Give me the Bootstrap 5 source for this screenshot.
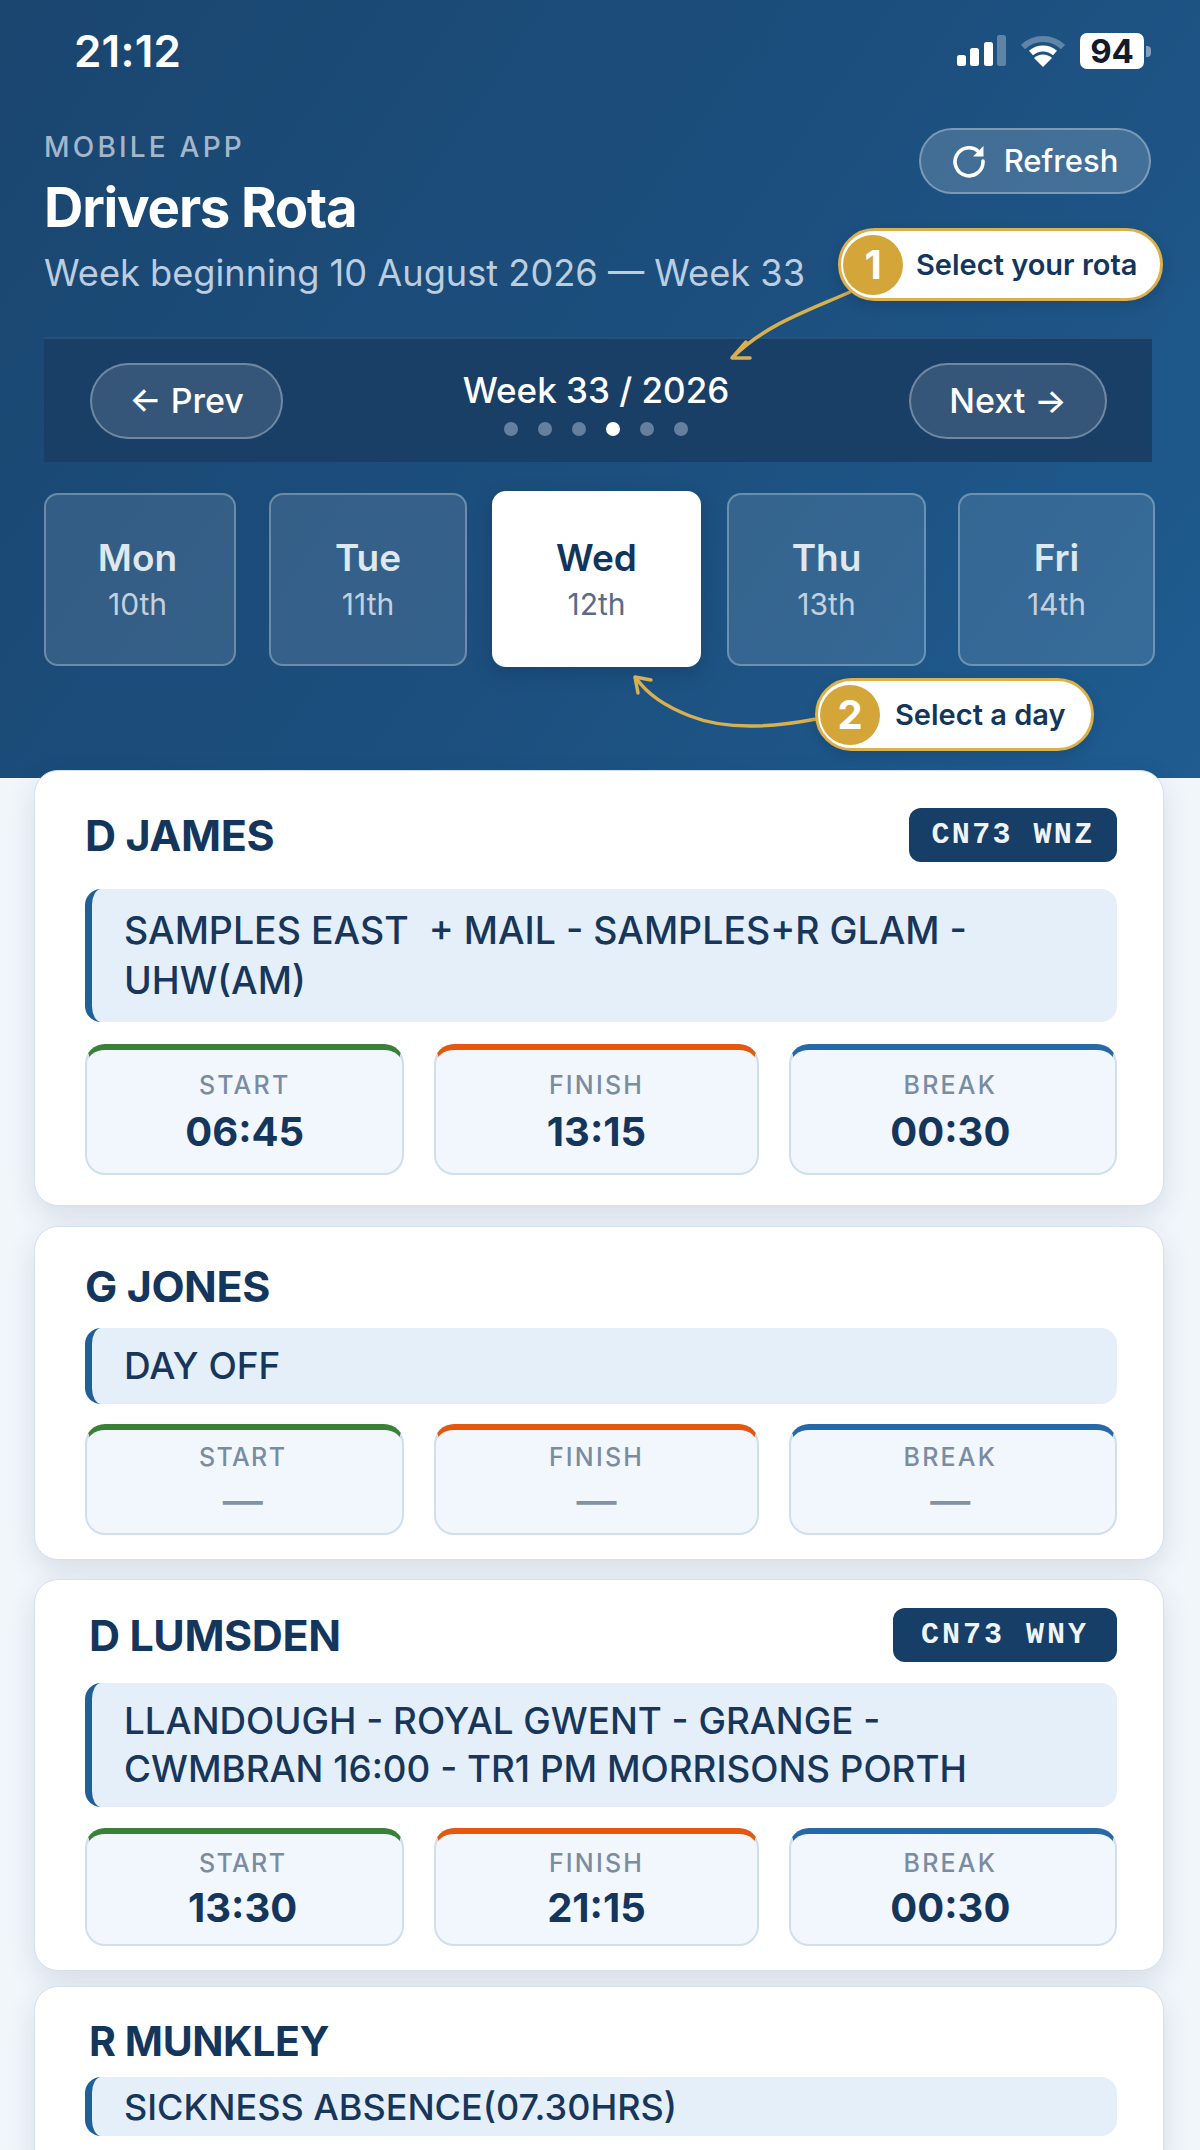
<!DOCTYPE html>
<html lang="en">
<head>
    <meta charset="UTF-8">
    <meta name="viewport" content="width=device-width, initial-scale=1.0">
    <title>Drivers Rota</title>
    <link href="https://cdn.jsdelivr.net/npm/bootstrap@5.3.2/dist/css/bootstrap.min.css" rel="stylesheet">
    <script src="https://cdn.jsdelivr.net/npm/bootstrap@5.3.2/dist/js/bootstrap.bundle.min.js"></script>
<style>
html, body { height: 2150px; margin: 0; overflow: hidden; }
body { background: #f1f6fb; font-family: Inter, "Liberation Sans", sans-serif; color: #16355a; }

.rota-head { height: 778px; padding: 33px 48px 0 44px; background: linear-gradient(125deg, #1a4670 0%, #1c4f7e 55%, #1f5c90 100%); color: #fff; }
.status-bar { height: 36px; padding-left: 30px; margin-right: 1px; }
.clock { font-size: 44px; font-weight: 600; line-height: 36px; letter-spacing: .2px; }
.batt { width: 64px; height: 36px; background: #fff; border-radius: 7px; color: #111c2b; font-size: 33px; font-weight: 700; line-height: 36px; text-align: center; }
.batt-nub { width: 5px; height: 11px; margin-left: 2px; background: rgba(255,255,255,.45); border-radius: 0 4px 4px 0; }
.status-icons { gap: 15px; }

.title-row { margin-top: 59px; margin-bottom: 42px; margin-right: 1px; height: 167px; }
.eyebrow { margin-top: 4px; font-size: 28px; line-height: 30px; font-weight: 500; letter-spacing: 3.2px; color: #a3b6cb; }
.rota-title { margin: 15px 0 0; font-size: 54.5px; line-height: 60px; font-weight: 700; letter-spacing: -1.2px; color: #fff; }
.rota-sub { margin: 14px 0 0; font-size: 36.2px; line-height: 44px; color: #bccde0; }

.btn.refresh { width: 232px; height: 66px; padding: 0; gap: 18px; background: rgba(255,255,255,.17); border: 2px solid rgba(255,255,255,.3); color: #fff; font-size: 31px; font-weight: 500; }

.week-band { height: 125px; padding: 0 45px 0 46px; background: #1a3f67; border-top: 2px solid #2a5078; }
.btn.pager { height: 76px; padding: 0; background: rgba(255,255,255,.12); border: 2px solid rgba(255,255,255,.3); color: #fff; font-size: 34px; font-weight: 500; }
.btn.pager-prev { width: 193px; }
.btn.pager-next { width: 198px; }
.week-label { margin-top: 2px; font-size: 35px; line-height: 44px; font-weight: 500; }
.week-dots { gap: 20px; margin-top: 10px; }
.week-dots span { width: 14px; height: 14px; border-radius: 50%; background: #64809e; }
.week-dots span.on { background: #fff; }

.day-row { margin-top: 29px; height: 176px; }
.day-tile { height: 173px; background: rgba(255,255,255,.11); border: 2px solid rgba(255,255,255,.28); border-radius: 14px; color: #dfe7ef; }
.day-tile .dn { font-size: 37px; line-height: 44px; font-weight: 600; }
.day-tile .dd { margin-top: 5px; font-size: 30px; line-height: 38px; color: #c3d1df; }
.day-tile.on { height: 176px; background: #fff; border-color: #fff; color: #12355b; box-shadow: 0 6px 18px rgba(8,30,60,.25); }
.day-tile.on .dd { color: #566d88; }
.d1 { width: 192px; padding-right: 5px; }
.d2 { width: 198px; margin-left: 33px; }
.d3 { width: 209px; margin-left: 25px; }
.d4 { width: 199px; margin-left: 26px; }
.d5 { width: 197px; margin-left: 32px; margin-right: -3px; }

.guide-lines { position: absolute; left: 0; top: 0; pointer-events: none; }
.callout { position: absolute; height: 73px; background: #fff; border: 3px solid #dcb04a; border-radius: 37px; color: #14365c; font-size: 29px; font-weight: 600; box-shadow: 0 4px 12px rgba(8,30,60,.2); }
.callout-a { left: 838px; top: 228px; width: 325px; }
.callout-b { left: 815px; top: 678px; width: 279px; }
.callout .num { flex: 0 0 60px; height: 60px; margin: 0 13px 0 2px; border-radius: 50%; background: #d4a63a; color: #fff; font-size: 40px; font-weight: 700; line-height: 60px; text-align: center; }
.callout-b .num { margin-right: 15px; }

.card-stack { position: relative; margin-top: -8px; padding: 0 36px 0 34px; }
.card.rota-card { padding-right: 46px; padding-left: 50px; border: 1.5px solid #d3e1ef; border-radius: 24px; background: #fff; box-shadow: 0 10px 28px rgba(30,50,80,.12); }
.card-hdr { height: 54px; }
.driver { font-size: 43px; line-height: 54px; font-weight: 700; letter-spacing: -.4px; color: #15365c; }
.inset { padding-left: 4px; }
.badge.plate { display: flex; align-items: center; justify-content: center; height: 54px; padding: 0; background: #163e66; border-radius: 12px; font-family: "Liberation Mono", monospace; font-size: 30px; font-weight: 700; letter-spacing: 2.4px; color: #eef4fa; }
.plate-z { width: 208px; }
.plate-y { width: 224px; }
.route { padding: 0 32px; background: #e4effa; border-left: 7px solid #1f6099; border-radius: 16px; font-size: 37px; font-weight: 500; line-height: 50px; color: #17365a; white-space: pre-wrap; }
.cells { display: grid; grid-template-columns: 319fr 324fr 328fr; gap: 30px; }
.cell { border: 2px solid #cfdfee; border-top-width: 6px; border-radius: 20px; background: #f2f7fd; text-align: center; }
.cell-start { border-top-color: #3a8038; }
.cell-finish { border-top-color: #e2580f; }
.cell-break { border-top-color: #2769a8; padding-right: 5px; }
.cell-lbl { font-size: 25px; line-height: 30px; font-weight: 500; letter-spacing: 2.2px; color: #7a8ca1; }
.cell-val { font-size: 40px; line-height: 44px; font-weight: 700; color: #15365c; }
.cell-val.none { font-weight: 500; color: #8192a7; }

.card.rc1 { padding-top: 37px; margin-bottom: 20px; }
.rc1 .card-hdr { margin-bottom: 27px; }
.rc1 .route { height: 133px; font-size: 37.5px; }
.rc1 .cells { margin-top: 22px; margin-bottom: 30px; }
.rc1 .cell { height: 131px; padding-top: 20px; }
.rc1 .cell-val { margin-top: 10px; }

.card.rc2 { padding-top: 32px; margin-bottom: 19px; }
.rc2 .card-hdr { margin-bottom: 15px; }
.rc2 .route { height: 76px; }
.rc2 .cells { margin-top: 20px; margin-bottom: 24px; }
.rc2 .cell { height: 111px; padding-top: 12px; }
.rc2 .cell-val { margin-top: 7px; }
.rc2 .cell-start, .rc3 .cell-start { padding-right: 4px; }
.rc2 .cell-start .cell-lbl, .rc3 .cell-start .cell-lbl { letter-spacing: 1.4px; }

.card.rc3 { padding-top: 28px; margin-bottom: 15px; }
.rc3 .card-hdr { margin-bottom: 21px; }
.rc3 .plate { letter-spacing: 3px; }
.rc3 .route { height: 124px; font-size: 36.8px; line-height: 48px; }
.rc3 .cells { margin-top: 21px; margin-bottom: 24px; }
.rc3 .cell { height: 118px; padding-top: 14px; }
.rc3 .cell-val { margin-top: 8px; }

.card.rc4 { padding-top: 27px; padding-bottom: 40px; }
.rc4 .card-hdr { margin-bottom: 9px; }
.rc4 .driver { font-size: 41px; }
.rc4 .route { height: 59px; font-size: 36px; }
</style>
</head>
<body>
<header class="rota-head position-relative">
    <div class="status-bar d-flex justify-content-between align-items-center">
        <div class="clock">21:12</div>
        <div class="status-icons d-flex align-items-center">
            <svg width="49" height="32" viewBox="0 0 49 32"><rect x="0" y="20" width="9" height="11" rx="2.5" fill="#fff"/><rect x="13" y="13" width="9" height="18" rx="2.5" fill="#fff"/><rect x="27" y="7" width="9" height="24" rx="2.5" fill="#fff"/><rect x="40" y="0" width="9" height="31" rx="2.5" fill="#fff" opacity=".3"/></svg>
            <svg width="44" height="34" viewBox="0 0 44 34"><path d="M2 13 A29 29 0 0 1 42 13" fill="none" stroke="#fff" stroke-opacity=".3" stroke-width="6"/><path d="M10 19 A18 18 0 0 1 34 19" fill="none" stroke="#fff" stroke-width="6"/><path d="M22 33 L13 24 A13 13 0 0 1 31 24 Z" fill="#fff"/></svg>
            <div class="d-flex align-items-center"><div class="batt">94</div><div class="batt-nub"></div></div>
        </div>
    </div>

    <div class="title-row d-flex justify-content-between align-items-start">
        <div>
            <div class="eyebrow">MOBILE APP</div>
            <h1 class="rota-title">Drivers Rota</h1>
            <p class="rota-sub">Week beginning 10 August 2026 — Week 33</p>
        </div>
        <button type="button" class="btn rounded-pill refresh d-flex align-items-center justify-content-center">
            <svg width="34" height="34" viewBox="0 0 34 34"><path d="M26.5 7.5 A14 14 0 1 0 31 17" fill="none" stroke="#fff" stroke-width="3.6" stroke-linecap="round"/><path d="M31.5 2 L31.5 12.5 L21 12.5 Z" fill="#fff"/></svg>
            <span>Refresh</span>
        </button>
    </div>

    <div class="week-band d-flex justify-content-between align-items-center">
        <button type="button" class="btn rounded-pill pager pager-prev">← Prev</button>
        <div class="d-flex flex-column align-items-center">
            <div class="week-label">Week 33 / 2026</div>
            <div class="week-dots d-flex"><span></span><span></span><span></span><span class="on"></span><span></span><span></span></div>
        </div>
        <button type="button" class="btn rounded-pill pager pager-next">Next →</button>
    </div>

    <div class="day-row d-flex align-items-center">
        <div class="day-tile d1 d-flex flex-column align-items-center justify-content-center"><div class="dn">Mon</div><div class="dd">10th</div></div>
        <div class="day-tile d2 d-flex flex-column align-items-center justify-content-center"><div class="dn">Tue</div><div class="dd">11th</div></div>
        <div class="day-tile d3 on d-flex flex-column align-items-center justify-content-center"><div class="dn">Wed</div><div class="dd">12th</div></div>
        <div class="day-tile d4 d-flex flex-column align-items-center justify-content-center"><div class="dn">Thu</div><div class="dd">13th</div></div>
        <div class="day-tile d5 d-flex flex-column align-items-center justify-content-center"><div class="dn">Fri</div><div class="dd">14th</div></div>
    </div>

    <svg class="guide-lines" width="1200" height="778" viewBox="0 0 1200 778" fill="none" stroke="#d9b04f" stroke-width="3.5" stroke-linecap="round" stroke-linejoin="round">
        <path d="M850 292 C 805 312, 765 325, 733 357"/>
        <path d="M746 342 L732 358 L750 358"/>
        <path d="M816 719 C 770 728, 725 730, 690 716 C 665 706, 648 695, 636 678"/>
        <path d="M638 693 L635 677 L651 680"/>
    </svg>
    <div class="callout callout-a d-flex align-items-center"><span class="num">1</span><span>Select your rota</span></div>
    <div class="callout callout-b d-flex align-items-center"><span class="num">2</span><span>Select a day</span></div>
</header>

<main class="card-stack">
    <div class="card rota-card rc1">
        <div class="card-hdr d-flex justify-content-between align-items-center">
            <div class="driver">D JAMES</div>
            <span class="badge plate plate-z">CN73 WNZ</span>
        </div>
        <div class="route d-flex align-items-center"><span>SAMPLES EAST  + MAIL - SAMPLES+R GLAM - UHW(AM)</span></div>
        <div class="cells">
            <div class="cell cell-start"><div class="cell-lbl">START</div><div class="cell-val">06:45</div></div>
            <div class="cell cell-finish"><div class="cell-lbl">FINISH</div><div class="cell-val">13:15</div></div>
            <div class="cell cell-break"><div class="cell-lbl">BREAK</div><div class="cell-val">00:30</div></div>
        </div>
    </div>

    <div class="card rota-card rc2">
        <div class="card-hdr d-flex align-items-center"><div class="driver">G JONES</div></div>
        <div class="route d-flex align-items-center"><span>DAY OFF</span></div>
        <div class="cells">
            <div class="cell cell-start"><div class="cell-lbl">START</div><div class="cell-val none">—</div></div>
            <div class="cell cell-finish"><div class="cell-lbl">FINISH</div><div class="cell-val none">—</div></div>
            <div class="cell cell-break"><div class="cell-lbl">BREAK</div><div class="cell-val none">—</div></div>
        </div>
    </div>

    <div class="card rota-card rc3">
        <div class="card-hdr d-flex justify-content-between align-items-center">
            <div class="driver inset">D LUMSDEN</div>
            <span class="badge plate plate-y">CN73 WNY</span>
        </div>
        <div class="route d-flex align-items-center"><span>LLANDOUGH - ROYAL GWENT - GRANGE -<br>CWMBRAN 16:00 - TR1 PM MORRISONS PORTH</span></div>
        <div class="cells">
            <div class="cell cell-start"><div class="cell-lbl">START</div><div class="cell-val">13:30</div></div>
            <div class="cell cell-finish"><div class="cell-lbl">FINISH</div><div class="cell-val">21:15</div></div>
            <div class="cell cell-break"><div class="cell-lbl">BREAK</div><div class="cell-val">00:30</div></div>
        </div>
    </div>

    <div class="card rota-card rc4">
        <div class="card-hdr d-flex align-items-center"><div class="driver inset">R MUNKLEY</div></div>
        <div class="route d-flex align-items-center"><span>SICKNESS ABSENCE(07.30HRS)</span></div>
    </div>
</main>
</body>
</html>
